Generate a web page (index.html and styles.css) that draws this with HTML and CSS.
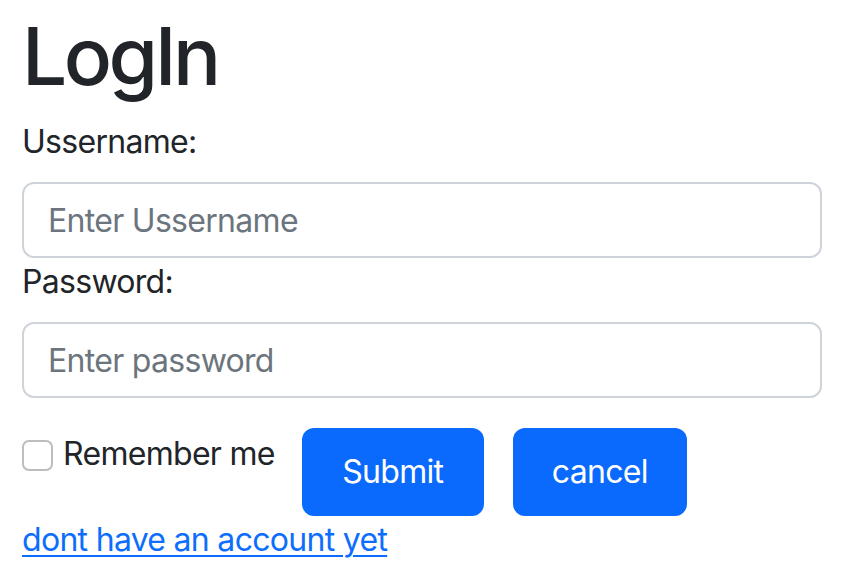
FILE: index.html
```html
<!DOCTYPE html>
<html lang="en">
<head>
<meta charset="utf-8">
<title>LogIn</title>
<link rel="stylesheet" href="styles.css">
</head>
<body>
<main class="page">
  <h1 class="title">LogIn</h1>
  <form class="form">
    <label class="label" for="user">Ussername:</label>
    <input class="field" id="user" type="text" placeholder="Enter Ussername">
    <label class="label" for="pass">Password:</label>
    <input class="field" id="pass" type="password" placeholder="Enter password">
    <div class="actions">
      <label class="check">
        <input class="box" type="checkbox">
        <span>Remember me</span>
      </label>
      <button class="btn btn-submit" type="submit">Submit</button>
      <button class="btn btn-cancel" type="button">cancel</button>
    </div>
  </form>
  <a class="link" href="#">dont have an account yet</a>
</main>
</body>
</html>
```
FILE: styles.css
```css
* { box-sizing: border-box; }
html, body { margin: 0; padding: 0; background: #fff; }
body {
  font-family: Inter, "Noto Sans", "Liberation Sans", sans-serif;
  color: #212529;
  font-size: 32px;
  line-height: 48px;
  letter-spacing: -0.7px;
}
.page {
  padding: 8px 20px 0 22px;
}
.title {
  margin: 0 0 14px;
  font-size: 80px;
  line-height: 96px;
  font-weight: 500;
  letter-spacing: -3.5px;
}
.form {
  display: flex;
  flex-direction: column;
}
.label {
  display: block;
  font-size: 32px;
  line-height: 48px;
}
.label:first-child { margin-bottom: 16px; }
.label + .field + .label { margin-bottom: 16px; }
.field {
  display: block;
  width: 100%;
  height: 76px;
  padding: 12px 24px;
  font: inherit;
  font-size: 32px;
  letter-spacing: -0.7px;
  color: #212529;
  border: 2px solid #ced4da;
  border-radius: 12px;
  background: #fff;
  outline: none;
}
.field::placeholder { color: #6c757d; }
.actions {
  display: flex;
  align-items: flex-start;
  margin-top: 30px;
}
.check {
  display: flex;
  align-items: center;
  gap: 10px;
  height: 48px;
  margin-top: 2px;
  margin-right: 27px;
}
.box {
  appearance: none;
  -webkit-appearance: none;
  margin: 2px 0 0;
  width: 31px;
  height: 31px;
  border: 2px solid #bdbdbd;
  border-radius: 7px;
  background: #fff;
}
.btn {
  height: 88px;
  padding: 0;
  font: inherit;
  font-size: 32px;
  letter-spacing: -0.7px;
  color: #fff;
  background: #0a6afd;
  border: none;
  border-radius: 12px;
}
.btn-submit { width: 182px; margin-right: 29px; }
.btn-cancel { width: 174px; }
.link {
  display: inline-block;
  align-self: flex-start;
  color: #0d6efd;
  text-decoration: underline;
  text-decoration-thickness: 2px;
  text-underline-offset: 4px;
}
```
